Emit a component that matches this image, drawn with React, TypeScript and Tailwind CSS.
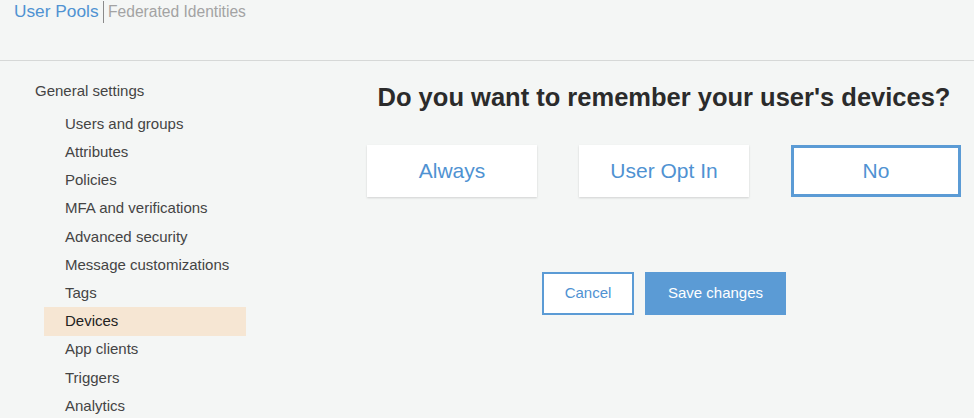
const items = [
  "Users and groups",
  "Attributes",
  "Policies",
  "MFA and verifications",
  "Advanced security",
  "Message customizations",
  "Tags",
  "Devices",
  "App clients",
  "Triggers",
  "Analytics",
];

const choices = ["Always", "User Opt In", "No"];

export default function App() {
  const selected = "No";
  const active = "Devices";

  return (
    <div
      className="w-[974px] h-[418px] overflow-hidden bg-[#f4f6f5] text-[#333]"
      style={{ fontFamily: '"Liberation Sans", Arial, sans-serif' }}
    >
      <div className="h-[61px] border-b border-[#d6d8d7] flex items-start pt-[1px] pl-[14px]">
        <div className="flex items-center h-[22px] leading-none">
          <span className="text-[17.3px] text-[#4f92d2]">User Pools</span>
          <span className="mx-[4px] w-[1.5px] h-[22px] bg-[#8a8a8a]" />
          <span className="text-[15.6px] text-[#a3a3a3]">Federated Identities</span>
        </div>
      </div>

      <div className="flex">
        <div className="w-[354px] pl-[44px] pt-[16px]">
          <div className="text-[15px] leading-[28px] text-[#444] -ml-[9px]">General settings</div>
          <div className="mt-[5px] w-[202px]">
            {items.map((item) => (
              <div
                key={item}
                className={`h-[28.2px] flex items-center pl-[21px] text-[15px] ${
                  item === active ? "bg-[#f6e6d3] text-[#222]" : "text-[#444]"
                }`}
              >
                {item}
              </div>
            ))}
          </div>
        </div>

        <div className="w-[620px] flex flex-col items-center">
          <h1 className="mt-[21px] text-[25.5px] leading-[30px] font-bold text-[#2b2b2b]">
            Do you want to remember your user's devices?
          </h1>
          <div className="mt-[33px] flex gap-[42px]">
            {choices.map((c) => (
              <div
                key={c}
                className={`w-[170px] h-[52px] bg-white flex items-center justify-center text-[21px] text-[#4f92d2] ${
                  c === selected
                    ? "border-[3px] border-[#5b9bd5]"
                    : "shadow-[0_1px_2px_rgba(0,0,0,0.15)]"
                }`}
              >
                {c}
              </div>
            ))}
          </div>
          <div className="mt-[75px] flex gap-[11px]">
            <button className="w-[92px] h-[43px] bg-white border-2 border-[#5b9bd5] text-[15px] text-[#4f92d2]">
              Cancel
            </button>
            <button className="w-[141px] h-[43px] bg-[#5b9bd5] text-[15px] text-white">
              Save changes
            </button>
          </div>
        </div>
      </div>
    </div>
  );
}
